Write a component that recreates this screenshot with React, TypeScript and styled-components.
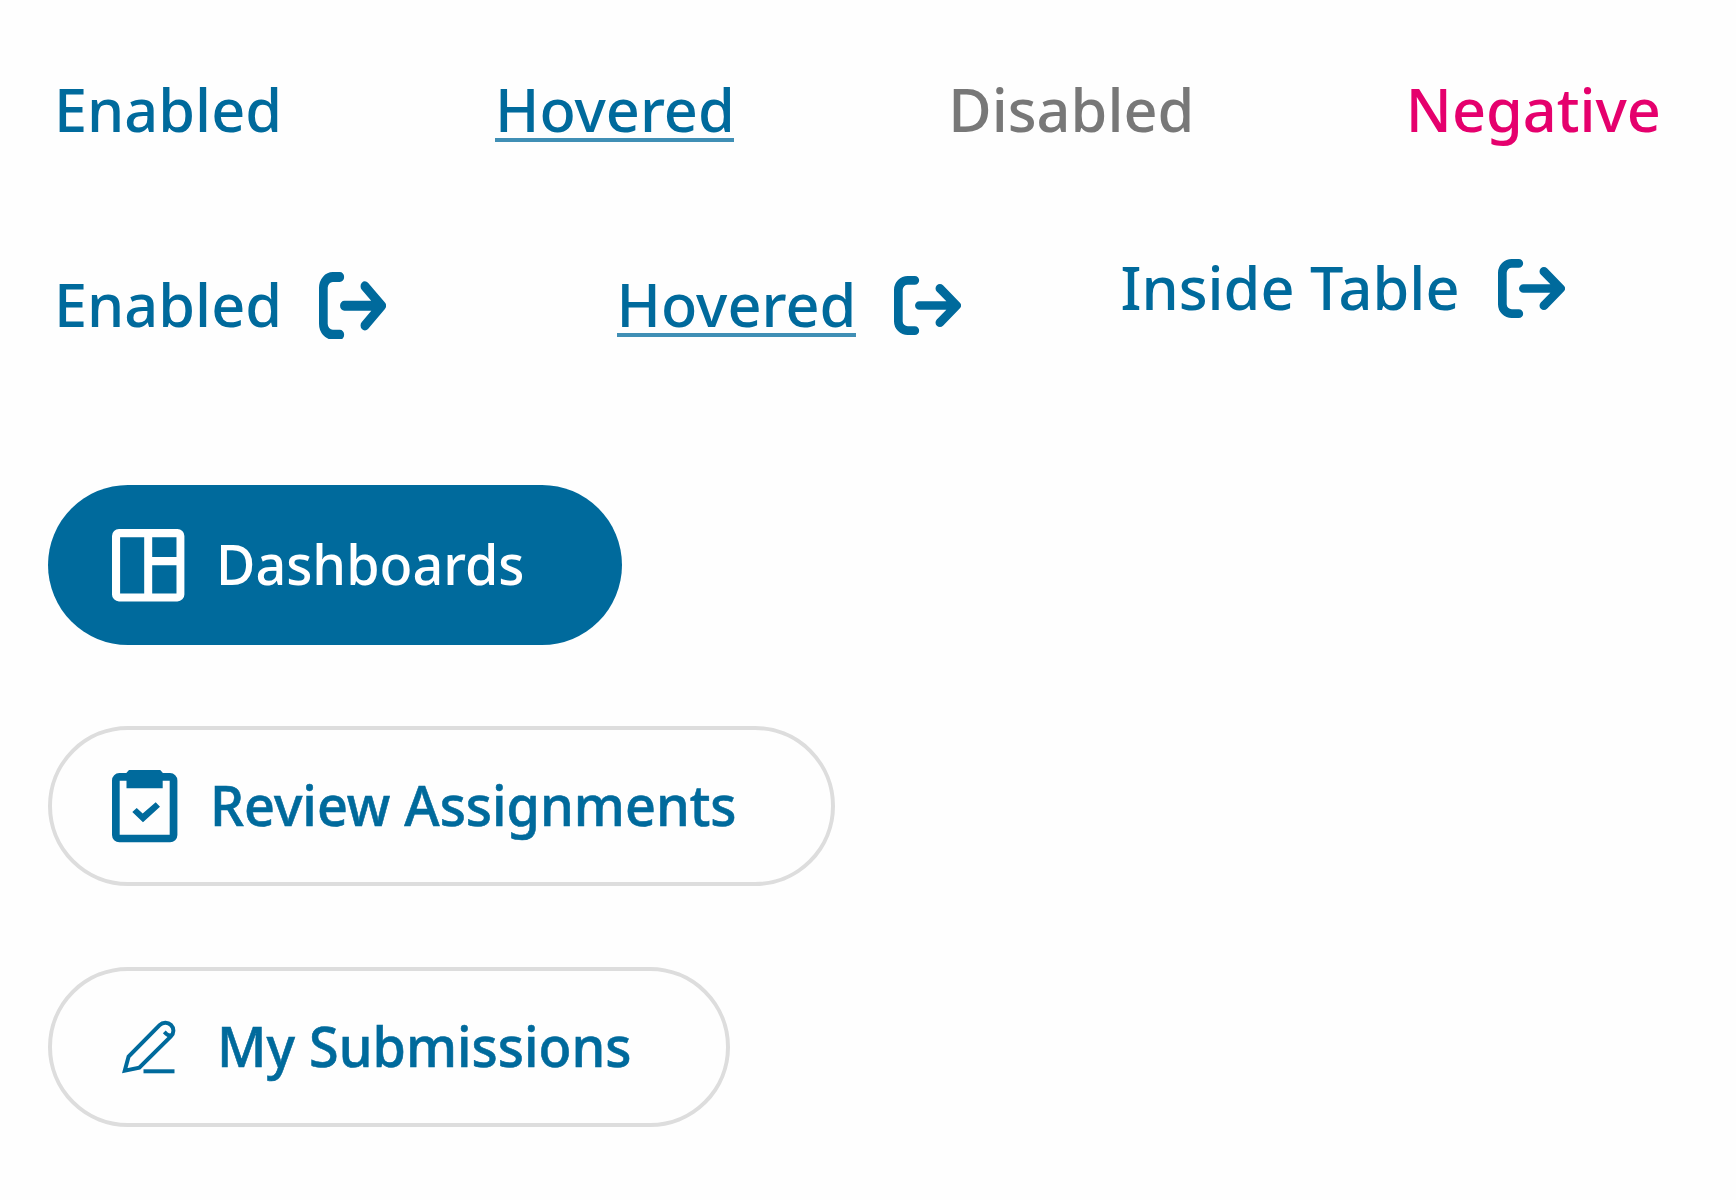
import React from "react";
import styled, { createGlobalStyle } from "styled-components";

const BLUE = "#006a9c";

const GlobalStyle = createGlobalStyle`
  *, *::before, *::after { box-sizing: border-box; }
  body { margin: 0; background: #fefefe; }
`;

const Page = styled.main`
  height: 1200px;
  padding: 69px 0 0 48px;
  display: flex;
  flex-direction: column;
  font-family: "Noto Sans", "Open Sans", sans-serif;
  font-weight: 500;
  overflow: hidden;
`;

const LinkRow = styled.div<{ $top?: number }>`
  display: flex;
  align-items: flex-start;
  height: 80px;
  margin-top: ${(p) => p.$top ?? 0}px;
  padding-left: 6px;
`;

const LinkButton = styled.a<{ $color?: string; $gap?: number; $raised?: boolean }>`
  display: flex;
  align-items: center;
  height: 80px;
  margin-left: ${(p) => p.$gap ?? 0}px;
  margin-top: ${(p) => (p.$raised ? -17 : 0)}px;
  color: ${(p) => p.$color ?? BLUE};
  font-size: 59.4px;
  line-height: 80px;
  white-space: nowrap;
`;

const LinkLabel = styled.span<{ $width: number; $hovered?: boolean }>`
  width: ${(p) => p.$width}px;
  height: 80px;
  background: ${(p) =>
    p.$hovered ? "linear-gradient(#408fb5, #408fb5) 0 69px / 100% 4px no-repeat" : "none"};
`;

const ExitGlyph = styled.svg<{ $height?: number; $drop?: number }>`
  width: 67.3px;
  height: ${(p) => p.$height ?? 59}px;
  margin-top: ${(p) => p.$drop ?? 3}px;
  margin-left: 37.7px;
  fill: none;
  stroke: currentColor;
  stroke-width: 8.7;
  stroke-linecap: round;
  stroke-linejoin: round;
`;

const PillList = styled.nav`
  display: flex;
  flex-direction: column;
  align-items: flex-start;
  gap: 81px;
  margin-top: 141px;
`;

const Pill = styled.button<{ $width: number; $active?: boolean }>`
  display: flex;
  align-items: center;
  width: ${(p) => p.$width}px;
  height: 160px;
  padding: 0 0 0 ${(p) => (p.$active ? 64.4 : 60.4)}px;
  border: ${(p) => (p.$active ? "0" : "4px solid #dddddd")};
  border-radius: 80px;
  background: ${(p) => (p.$active ? BLUE : "#fefefe")};
  color: ${(p) => (p.$active ? "#ffffff" : BLUE)};
  font: inherit;
  font-size: 57px;
  line-height: 80px;
  text-align: left;
  -webkit-text-stroke: ${(p) => (p.$active ? 0 : 0.6)}px currentColor;
`;

const PillLabel = styled.span<{ $gap: number; $squeeze: number }>`
  margin-left: ${(p) => p.$gap}px;
  padding-bottom: 4px;
  white-space: nowrap;
  transform: scaleX(${(p) => p.$squeeze});
  transform-origin: left center;
`;

const PillGlyph = styled.svg<{ $width: number }>`
  flex: none;
  width: ${(p) => p.$width}px;
  height: 72.4px;
  overflow: visible;
`;

function ExitIcon({ height, drop }: { height?: number; drop?: number }) {
  return (
    <ExitGlyph viewBox="0 0 67.3 59" preserveAspectRatio="none" $height={height} $drop={drop}>
      <path d="M20.8 4.35H13.8A9.45 9.45 0 0 0 4.35 13.8V45.2A9.45 9.45 0 0 0 13.8 54.65H20.8" />
      <path d="M25.4 29.5H61M45.9 12.4L62.6 29.5L45.9 46.6" />
    </ExitGlyph>
  );
}

function DashboardIcon() {
  return (
    <PillGlyph $width={72.4} viewBox="0 0 72.4 72.4">
      <path
        fill="currentColor"
        fillRule="evenodd"
        d="M7 0H65.4A7 7 0 0 1 72.4 7V65.4A7 7 0 0 1 65.4 72.4H7A7 7 0 0 1 0 65.4V7A7 7 0 0 1 7 0ZM8.1 8.2V64.4H32.2V8.2ZM40.2 8.2V28H64.5V8.2ZM40.2 36.2V64.4H64.5V36.2Z"
      />
    </PillGlyph>
  );
}

function ClipboardIcon() {
  return (
    <PillGlyph $width={65.4} viewBox="0 0 65.4 72.4">
      <rect x="3.85" y="6.9" width="57.7" height="61.6" rx="3.5" fill="none" stroke="currentColor" strokeWidth="7.7" />
      <path
        fill="currentColor"
        d="M17 0H48.2L50.7 2.8V18.2H14.5V2.8ZM20.3 42L24.7 38L30.7 43.5L43.7 32.3L48 36.7L31 52.3Z"
      />
    </PillGlyph>
  );
}

function PencilIcon() {
  return (
    <PillGlyph $width={72.4} viewBox="0 0 72.4 72.4" fill="none" stroke="currentColor" strokeWidth="4">
      <path d="M12.8 59.6L16.6 45.5L47.6 14.2C50.8 11 55.8 10.8 59 14C62.3 17.3 62.1 22.2 58.9 25.4L27.3 56.6Z" />
      <path d="M52.3 20.8L54.3 22.8Q56.3 24.8 59.2 24.5" />
      <path d="M31.5 60.3H62.5" />
    </PillGlyph>
  );
}

export default function App() {
  return (
    <>
      <GlobalStyle />
      <Page>
        <LinkRow>
          <LinkButton>
            <LinkLabel $width={228}>Enabled</LinkLabel>
          </LinkButton>
          <LinkButton $gap={213}>
            <LinkLabel $width={239.3} $hovered>Hovered</LinkLabel>
          </LinkButton>
          <LinkButton $gap={214} $color="#787878">
            <LinkLabel $width={250}>Disabled</LinkLabel>
          </LinkButton>
          <LinkButton $gap={207.5} $color="#e5006d">
            <LinkLabel $width={256}>Negative</LinkLabel>
          </LinkButton>
        </LinkRow>
        <LinkRow $top={115}>
          <LinkButton>
            <LinkLabel $width={227.2}>Enabled</LinkLabel>
            <ExitIcon height={67.7} drop={3} />
          </LinkButton>
          <LinkButton $gap={230.4}>
            <LinkLabel $width={239.7} $hovered>Hovered</LinkLabel>
            <ExitIcon />
          </LinkButton>
          <LinkButton $gap={159.2} $raised>
            <LinkLabel $width={339.8}>Inside Table</LinkLabel>
            <ExitIcon drop={3} />
          </LinkButton>
        </LinkRow>
        <PillList>
          <Pill $width={574} $active>
            <DashboardIcon />
            <PillLabel $gap={31.6} $squeeze={0.945}>Dashboards</PillLabel>
          </Pill>
          <Pill $width={787}>
            <ClipboardIcon />
            <PillLabel $gap={32} $squeeze={0.946}>Review Assignments</PillLabel>
          </Pill>
          <Pill $width={682}>
            <PencilIcon />
            <PillLabel $gap={32} $squeeze={0.946}>My Submissions</PillLabel>
          </Pill>
        </PillList>
      </Page>
    </>
  );
}
